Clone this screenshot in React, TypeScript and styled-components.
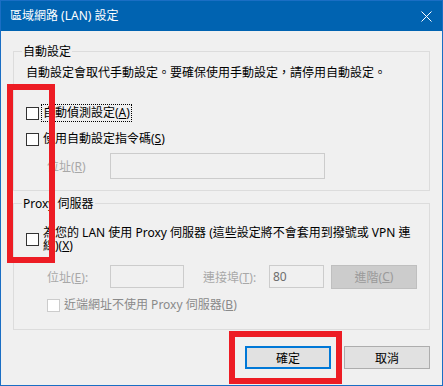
import React from 'react';
import styled, { createGlobalStyle } from 'styled-components';

const GlobalStyle = createGlobalStyle`
  html, body {
    margin: 0;
    padding: 0;
    background: #f0f0f0;
  }
  body {
    font-family: "Noto Sans", "Noto Sans CJK TC", sans-serif;
    font-size: 12px;
    color: #000;
  }
`;

const Page = styled.div`
  position: relative;
  width: 443px;
  height: 386px;
`;

const Window = styled.div`
  box-sizing: border-box;
  width: 100%;
  height: 100%;
  border: 1px solid #1a6ec4;
  background: #f0f0f0;
  display: flex;
  flex-direction: column;
`;

const TitleBar = styled.div`
  height: 30px;
  flex: none;
  background: #0063b1;
  color: #fff;
  display: flex;
  align-items: center;
  justify-content: space-between;
  padding: 0 10px 0 9px;
  font-size: 12px;
  line-height: 16px;
`;

const Body = styled.div`
  flex: 1;
  display: flex;
  flex-direction: column;
  padding: 13px 12px 0 12px;
`;

const Group = styled.fieldset<{ $mt?: number; $pb: number }>`
  margin: ${({ $mt }) => $mt ?? 0}px 0 0 0;
  padding: 0 12px ${({ $pb }) => $pb}px 12px;
  border: 1px solid #dcdcdc;
  min-width: 0;
  display: flex;
  flex-direction: column;
  align-items: flex-start;
`;

const Legend = styled.legend`
  padding: 0 1px;
  margin-left: -4px;
  line-height: 15px;
  font-size: 12px;
`;

const Description = styled.div`
  margin-top: 5px;
  line-height: 17px;
  white-space: nowrap;
`;

const CheckRow = styled.div<{ $mt: number; $indent?: number }>`
  display: flex;
  align-items: center;
  gap: 2px;
  margin-top: ${({ $mt }) => $mt}px;
  padding-left: ${({ $indent }) => $indent ?? 0}px;
`;

const Box = styled.span<{ $disabled?: boolean }>`
  box-sizing: border-box;
  flex: none;
  width: 13px;
  height: 13px;
  background: #fff;
  border: 1px solid ${({ $disabled }) => ($disabled ? '#cccccc' : '#333333')};
`;

const CheckLabel = styled.span<{ $focused?: boolean; $disabled?: boolean; $lh?: number }>`
  border: 1px dotted ${({ $focused }) => ($focused ? '#000' : 'transparent')};
  padding: 0 1px;
  line-height: ${({ $lh }) => $lh ?? 16}px;
  white-space: nowrap;
  color: ${({ $disabled }) => ($disabled ? '#8a8a8a' : '#000')};
`;

const FieldRow = styled.div<{ $mt: number }>`
  display: flex;
  align-items: center;
  height: 25px;
  margin-top: ${({ $mt }) => $mt}px;
  padding-left: 21px;
`;

const FieldLabel = styled.span<{ $w: number; $ml?: number }>`
  width: ${({ $w }) => $w}px;
  margin-left: ${({ $ml }) => $ml ?? 0}px;
  color: #a8a8a8;
  white-space: nowrap;
  flex: none;
`;

const TextBox = styled.div<{ $w: number; $h: number }>`
  box-sizing: border-box;
  width: ${({ $w }) => $w}px;
  height: ${({ $h }) => $h}px;
  border: 1px solid #cccccc;
  background: #f0f0f0;
  color: #6d6d6d;
  padding: 0 3px;
  display: flex;
  align-items: center;
  flex: none;
`;

const AdvancedButton = styled.div`
  box-sizing: border-box;
  width: 86px;
  height: 24px;
  margin-left: 7px;
  background: #cccccc;
  border: 1px solid #bfbfbf;
  color: #9a9a9a;
  display: flex;
  align-items: center;
  justify-content: center;
`;

const Footer = styled.div`
  display: flex;
  justify-content: flex-end;
  gap: 13px;
  margin-top: 16px;
`;

const Button = styled.button<{ $default?: boolean }>`
  box-sizing: border-box;
  width: 86px;
  height: 23px;
  padding: 0;
  font: inherit;
  color: #000;
  background: #e1e1e1;
  border: ${({ $default }) => ($default ? '2px solid #0078d7' : '1px solid #adadad')};
`;

const Mark = styled.div`
  position: absolute;
  box-sizing: border-box;
  border: 6px solid #ed1c24;
  pointer-events: none;
`;

const CheckboxMark = styled(Mark)`
  left: 7px;
  top: 84px;
  width: 48px;
  height: 179px;
`;

const OkMark = styled(Mark)`
  left: 229px;
  top: 331px;
  width: 113px;
  height: 53px;
`;

const CloseIcon = () => (
  <svg width="11" height="11" viewBox="0 0 11 11">
    <path d="M0.5 0.5 L10.5 10.5 M10.5 0.5 L0.5 10.5" stroke="#fff" strokeWidth="1" />
  </svg>
);

export default function App() {
  return (
    <Page>
      <GlobalStyle />
      <Window>
        <TitleBar>
          <span>區域網路 (LAN) 設定</span>
          <CloseIcon />
        </TitleBar>
        <Body>
          <Group $pb={11}>
            <Legend>自動設定</Legend>
            <Description>自動設定會取代手動設定。要確保使用手動設定，請停用自動設定。</Description>
            <CheckRow $mt={23}>
              <Box />
              <CheckLabel $focused>
                自動偵測設定(<u>A</u>)
              </CheckLabel>
            </CheckRow>
            <CheckRow $mt={8}>
              <Box />
              <CheckLabel>
                使用自動設定指令碼(<u>S</u>)
              </CheckLabel>
            </CheckRow>
            <FieldRow $mt={5} style={{ height: 26 }}>
              <FieldLabel $w={63}>
                位址(<u>R</u>)
              </FieldLabel>
              <TextBox $w={215} $h={26} />
            </FieldRow>
          </Group>
          <Group $mt={5} $pb={15}>
            <Legend>Proxy 伺服器</Legend>
            <CheckRow $mt={14}>
              <Box />
              <CheckLabel $lh={13}>
                為您的 LAN 使用 Proxy 伺服器 (這些設定將不會套用到撥號或 VPN 連
                <br />
                線)(<u>X</u>)
              </CheckLabel>
            </CheckRow>
            <FieldRow $mt={11}>
              <FieldLabel $w={63}>
                位址(<u>E</u>):
              </FieldLabel>
              <TextBox $w={74} $h={23} />
              <FieldLabel $w={66} $ml={19}>
                連接埠(<u>T</u>):
              </FieldLabel>
              <TextBox $w={55} $h={23}>80</TextBox>
              <AdvancedButton>
                進階(<u>C</u>)
              </AdvancedButton>
            </FieldRow>
            <CheckRow $mt={7} $indent={21}>
              <Box $disabled />
              <CheckLabel $disabled>
                近端網址不使用 Proxy 伺服器(<u>B</u>)
              </CheckLabel>
            </CheckRow>
          </Group>
          <Footer>
            <Button $default>確定</Button>
            <Button>取消</Button>
          </Footer>
        </Body>
      </Window>
      <CheckboxMark />
      <OkMark />
    </Page>
  );
}
